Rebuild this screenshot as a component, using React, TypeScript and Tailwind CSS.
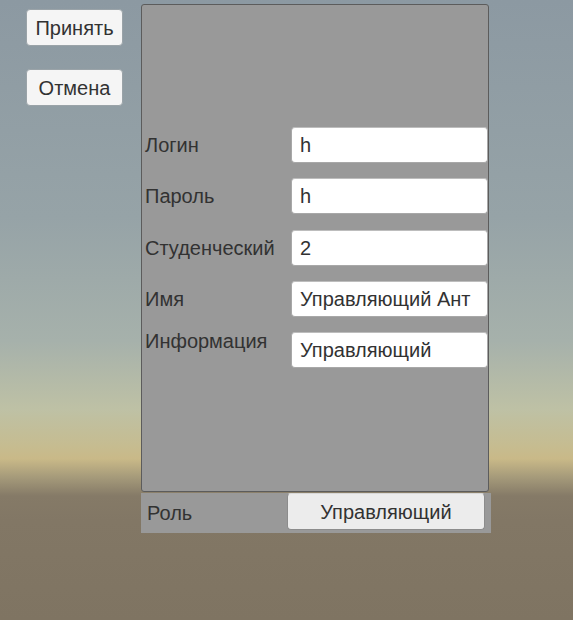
const rows = [
  { label: "Логин", value: "h" },
  { label: "Пароль", value: "h" },
  { label: "Студенческий", value: "2" },
  { label: "Имя", value: "Управляющий Ант" },
  { label: "Информация", value: "Управляющий", top: true },
];

const SideButton = ({ text }: { text: string }) => (
  <button className="w-[97px] h-[37px] rounded-[4px] bg-[#f5f5f5] border border-[#9aa3a8] text-[20px] text-[#323232] leading-none">
    {text}
  </button>
);

const App = () => {
  return (
    <div
      className="w-[573px] h-[620px] flex bg-[linear-gradient(to_bottom,#8c99a2_0%,#96a3a7_35%,#a6b1ab_55%,#bec1a5_66%,#c6bc90_72%,#c9b988_74%,#a59a7a_77%,#857a67_80%,#827765_84%,#7f7462_100%)] text-[#323232] overflow-hidden"
      style={{ fontFamily: '"Liberation Sans", Arial, sans-serif' }}
    >
      <div className="pl-[26px] pt-[9px] flex flex-col gap-[23px]">
        <SideButton text="Принять" />
        <SideButton text="Отмена" />
      </div>

      <div className="ml-[18px] pt-[4px] flex flex-col">
        <div className="w-[348px] h-[488px] bg-[#999999] border border-[#5c5c5c] rounded-[3px] pt-[122px]">
          <div className="flex flex-col gap-[15.25px]">
            {rows.map((r) => (
              <div
                key={r.label}
                className={`flex justify-between ${r.top ? "items-start" : "items-center"}`}
              >
                <span
                  className={`pl-[3px] text-[20px] leading-none ${r.top ? "-mt-[1px]" : ""}`}
                >
                  {r.label}
                </span>
                <div className="w-[197px] h-[36px] bg-white rounded-[4px] border border-[#a8a8a8] border-t-[#bdbdbd] flex items-center pl-[8px] text-[20px] leading-none">
                  {r.value}
                </div>
              </div>
            ))}
          </div>
        </div>

        <div className="mt-[1px] w-[350px] h-[40px] bg-[#999999] flex items-start justify-between pr-[6px]">
          <span className="pl-[6px] pt-[10px] text-[20px] leading-none">Роль</span>
          <button className="w-[198px] h-[37px] rounded-[4px] bg-[#ececec] border border-[#8c8c8c] border-t-[#d8d8d8] text-[20px] leading-none text-[#323232]">
            Управляющий
          </button>
        </div>
      </div>
    </div>
  );
};

export default App;
